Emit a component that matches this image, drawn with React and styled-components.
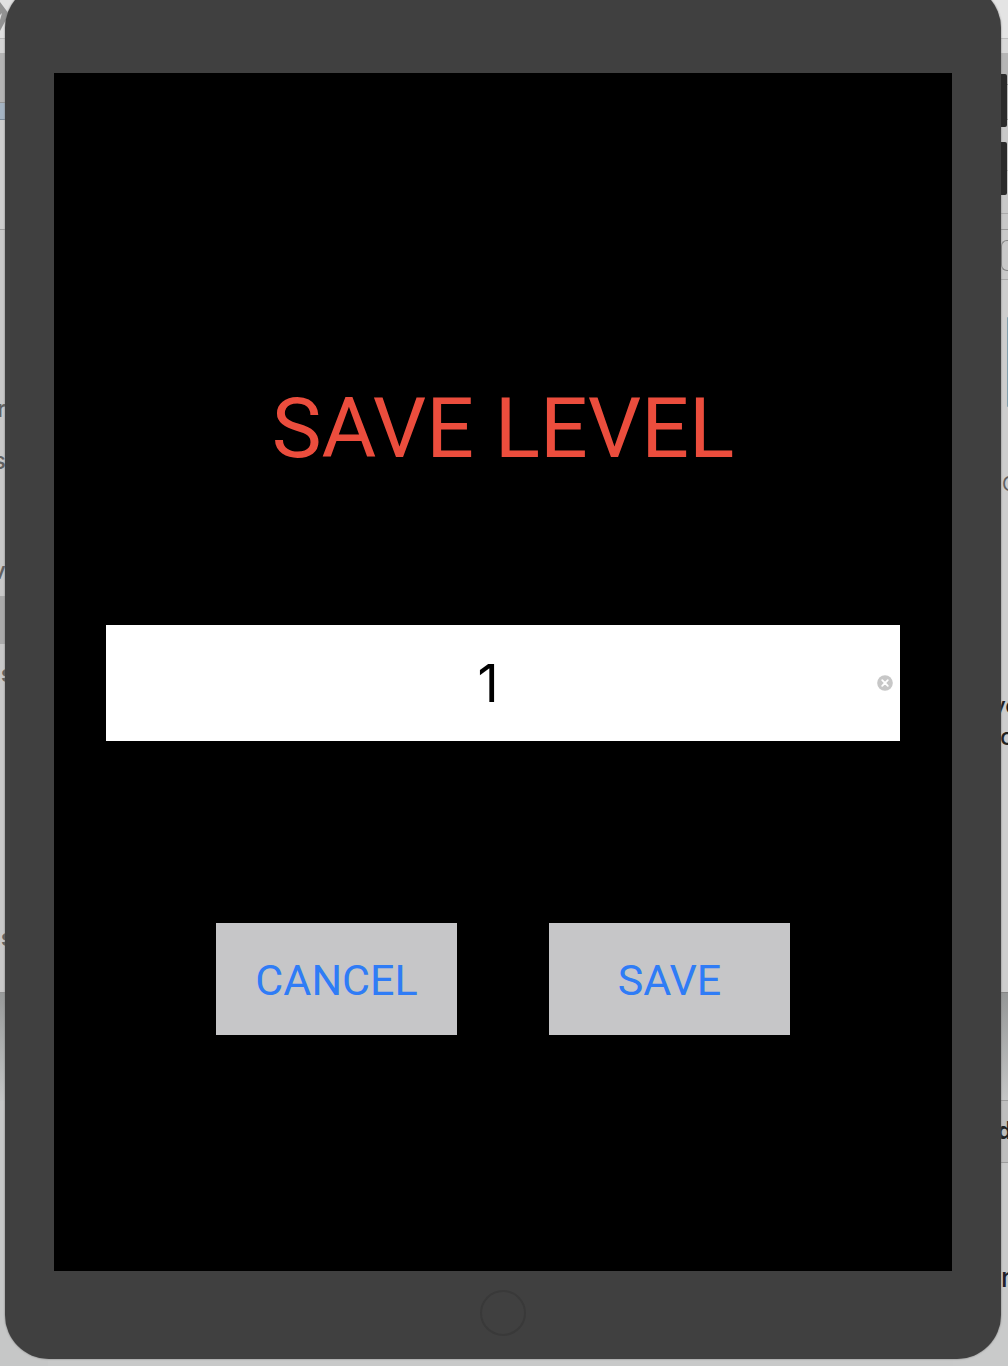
import React, { useState } from "react";
import styled, { createGlobalStyle } from "styled-components";

const GlobalStyle = createGlobalStyle`
  *, *::before, *::after { box-sizing: border-box; }
  body { margin: 0; background: #c8c9c9; font-family: Inter, "Liberation Sans", sans-serif; }
`;

const Desktop = styled.div`
  display: grid;
  grid-template-columns: minmax(0, 1fr);
  min-height: 100vh;
  overflow: hidden;
`;

const WindowEdge = styled.div`
  grid-area: 1 / 1;
  justify-self: ${(p) => p.$side};
  width: ${(p) => (p.$side === "start" ? 48 : 55)}px;
  padding-left: ${(p) => (p.$side === "start" ? 0 : 48)}px;
  height: 100%;
  overflow: hidden;
  background: ${(p) => (p.$side === "start" ? "#c6c7c7" : "#c9caca")};
`;

const Band = styled.div`
  height: ${(p) => p.$h}px;
  margin-left: ${(p) => (p.$bleed ? -48 : 0)}px;
  background: ${(p) => p.$bg || "transparent"};
  border-bottom: ${(p) => (p.$line ? `1px solid ${p.$line}` : "0")};
  overflow: hidden;
`;

const Word = styled.div`
  height: 24px;
  line-height: 24px;
  font-size: ${(p) => p.$size || 24}px;
  font-weight: ${(p) => p.$weight || 500};
  color: ${(p) => p.$color || "#606060"};
  text-indent: ${(p) => p.$indent || 0}px;
  white-space: nowrap;
`;

const Rounded = styled.div`
  height: 31px;
  border: 1px solid #858585;
  border-right: 0;
  border-radius: 6px 0 0 6px;
`;

const Tile = styled.div`
  height: 90px;
  margin-left: 6px;
  background: #829fac;
  border-radius: 4px 0 0 4px;
`;

const Tablet = styled.div`
  grid-area: 1 / 1;
  z-index: 1;
  align-self: start;
  margin: -16px 7px 7px 5px;
  padding: 89px 49px 23px;
  border-radius: 44px;
  background: #404040;
  box-shadow: 0 0 2px #707070;
`;

const SideKeys = styled.div`
  grid-area: 1 / 1;
  z-index: 2;
  justify-self: end;
  align-self: start;
  display: grid;
  gap: 15px;
  padding: 74px 1px 0 0;
`;

const SideKey = styled.div`
  width: 6px;
  height: 53px;
  border-radius: 0 2px 2px 0;
  background: #2b2b2b;
`;

const Screen = styled.form`
  display: flex;
  flex-direction: column;
  padding: 306px 52px 236px;
  background: #000;
`;

const Title = styled.h1`
  margin: 0 0 146px;
  font: 400 84px/100px Roboto, "Liberation Sans", sans-serif;
  text-align: center;
  color: #eb4d3d;
`;

const Field = styled.div`
  display: flex;
  align-items: center;
  height: 116px;
  margin-bottom: 182px;
  background: #fff;
`;

const LevelInput = styled.input`
  flex: 1;
  min-width: 0;
  height: 100%;
  padding: 0;
  border: 0;
  outline: 0;
  background: transparent;
  color: #000;
  font: 400 52px Inter, "Liberation Sans", sans-serif;
  text-align: center;
`;

const ClearButton = styled.button`
  display: grid;
  place-items: center;
  width: 30px;
  height: 30px;
  padding: 0;
  border: 0;
  background: transparent;
`;

const Actions = styled.div`
  display: flex;
  justify-content: center;
  gap: 92px;
`;

const ActionButton = styled.button`
  width: 241px;
  height: 112px;
  padding: 2px 0 0;
  border: 0;
  background: #c6c6c8;
  color: #2f7cf6;
  font: 400 43px Roboto, "Liberation Sans", sans-serif;
`;

const HomeButton = styled.button`
  display: block;
  width: 46px;
  height: 46px;
  margin: 19px auto 0;
  padding: 0;
  border: 2px solid #393939;
  border-radius: 50%;
  background: transparent;
`;

const Arrow = styled.svg`
  display: block;
`;

function LeftWindow() {
  return (
    <WindowEdge $side="start" aria-hidden="true">
      <Band $h={39} $bg="#e1e1e1" $line="#bcbcbc">
        <Arrow width="16" height="38" viewBox="0 0 16 38">
          <path d="M0 2L9 14L0 31Z" fill="#929292" />
          <path d="M0 15L2 13L0 20Z" fill="#e1e1e1" />
        </Arrow>
      </Band>
      <Band $h={14} $bg="#d5d5d5" />
      <Band $h={50} $bg="#b4b4b4" $line="#969696" />
      <Band $h={17} $bg="#a5b4c3" $line="#7c8b99" />
      <Band $h={110} $bg="#cecece" $line="#a0a0a0" />
      <Band $h={366} $bg="#c8c8c8">
        <Band $h={167} />
        <Word $indent={-3}>r</Word>
        <Band $h={28} />
        <Word $indent={-7}>s</Word>
        <Band $h={86} />
        <Word $indent={-8}>v</Word>
      </Band>
      <Band $h={48} $bg="#aaaaaa" />
      <Band $h={349} $bg="#c8c8c8" $line="#949494">
        <Band $h={18} />
        <Word $weight={700} $indent={1}>s</Word>
        <Band $h={240} />
        <Word $weight={700} $indent={1}>s</Word>
      </Band>
      <Band $h={108} $bg="linear-gradient(#989a9a, #c4c6c6)" />
    </WindowEdge>
  );
}

function RightWindow() {
  return (
    <WindowEdge $side="end" aria-hidden="true">
      <Band $bleed $h={39} $bg="#e4e4e4" $line="#bdbdbd" />
      <Band $h={14} $bg="#d8d8d8" />
      <Band $h={32} $bg="#b5b5b5" $line="#888888" />
      <Band $h={35} $bg="#b8b8b8" $line="#909090" />
      <Band $h={51} $bg="#c8c8c8" $line="#aaaaaa" />
      <Band $h={43} $bg="#c8c8c8" $line="#aaaaaa" />
      <Band $h={16} $bg="#c8c8c8" $line="#999999" />
      <Band $h={50} $bg="#c9c9c9" $line="#aaaaaa">
        <Band $h={10} />
        <Rounded />
      </Band>
      <Band $h={713} $bg="#cdcdcd" $line="#858585">
        <Band $h={37} />
        <Tile />
        <Band $h={65} />
        <Word $size={20} $weight={400} $indent={1}>C</Word>
        <Band $h={198} />
        <Word $color="#202020" $indent={-9}>ve</Word>
        <Band $h={7} />
        <Word $color="#202020" $indent={-1}>c</Word>
      </Band>
      <Band $h={108} $bg="linear-gradient(#959797, #c5c6c6)" $line="#9c9c9c" />
      <Band $h={62} $bg="#bebebe" $line="#9c9c9c">
        <Band $h={18} />
        <Word $color="#202020" $weight={700} $indent={-4}>d</Word>
      </Band>
      <Band $h={203} $bg="#c9caca">
        <Band $h={103} />
        <Word $color="#20202a" $size={26}>r</Word>
      </Band>
    </WindowEdge>
  );
}

export default function App() {
  const [level, setLevel] = useState("1");

  return (
    <Desktop>
      <GlobalStyle />
      <LeftWindow />
      <RightWindow />
      <SideKeys aria-hidden="true">
        <SideKey />
        <SideKey />
      </SideKeys>
      <Tablet>
        <Screen onSubmit={(e) => e.preventDefault()}>
          <Title id="save-title">SAVE LEVEL</Title>
          <Field>
            <LevelInput
              type="text"
              aria-labelledby="save-title"
              value={level}
              onChange={(e) => setLevel(e.target.value)}
            />
            <ClearButton type="button" aria-label="Clear" onClick={() => setLevel("")}>
              <svg width="16" height="16" viewBox="0 0 16 16">
                <circle cx="8" cy="8" r="7.8" fill="#c7c7c7" />
                <path d="M5.2 5.2L10.8 10.8M10.8 5.2L5.2 10.8" stroke="#fff" strokeWidth="1.8" strokeLinecap="round" />
              </svg>
            </ClearButton>
          </Field>
          <Actions>
            <ActionButton type="button">CANCEL</ActionButton>
            <ActionButton type="submit">SAVE</ActionButton>
          </Actions>
        </Screen>
        <HomeButton type="button" aria-label="Home" />
      </Tablet>
    </Desktop>
  );
}
